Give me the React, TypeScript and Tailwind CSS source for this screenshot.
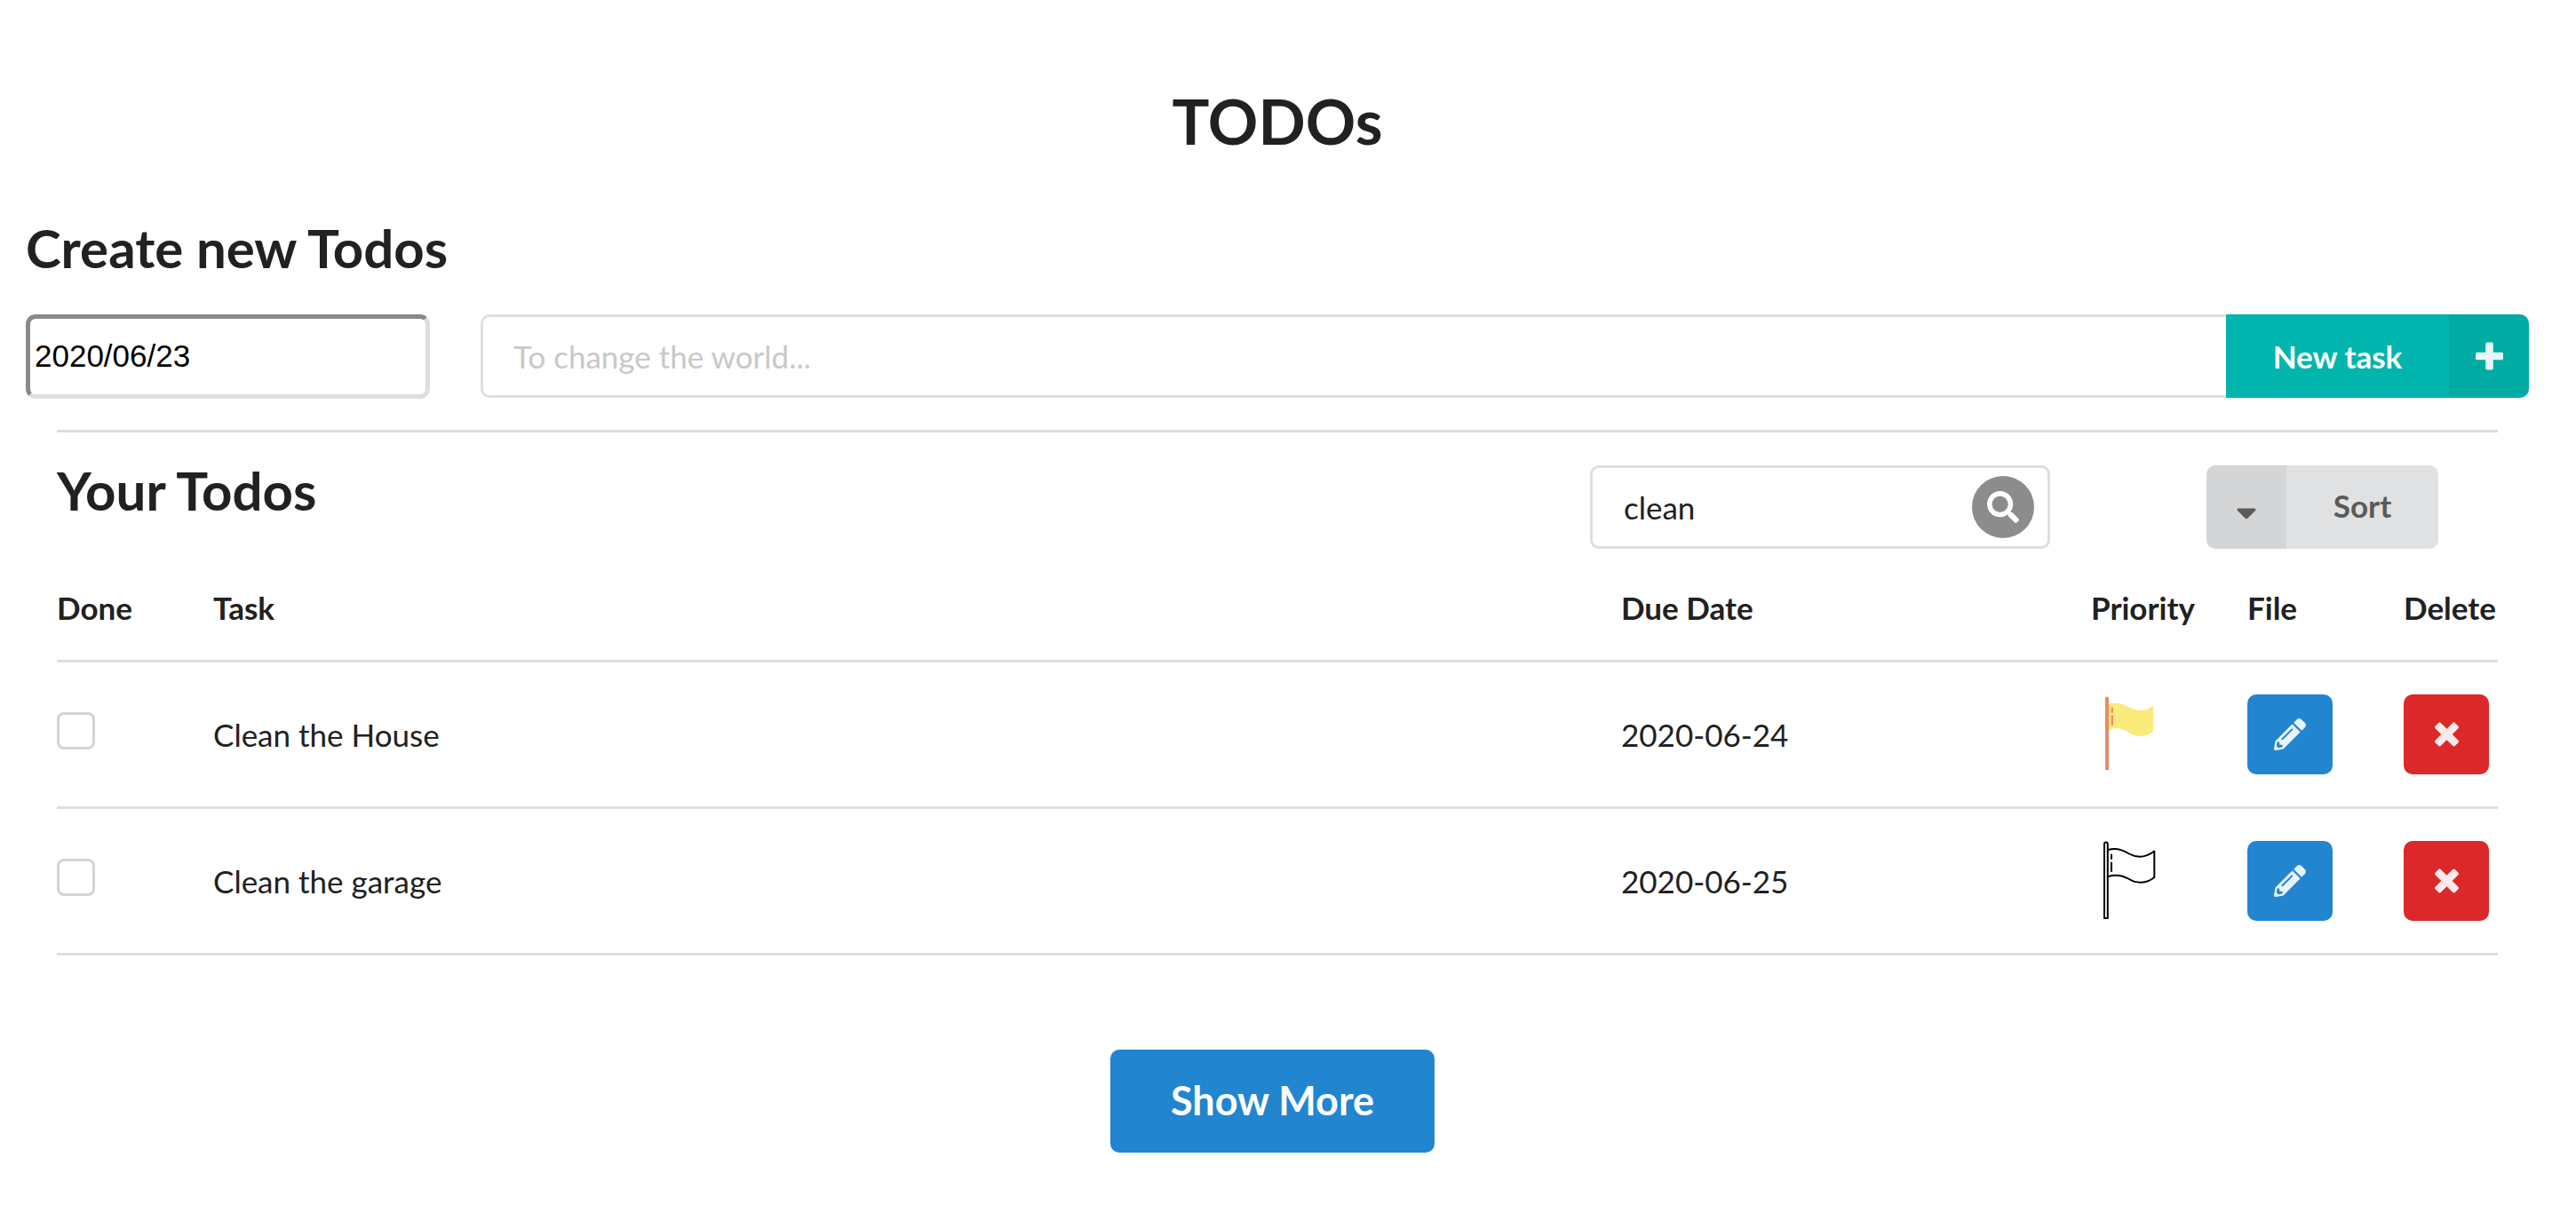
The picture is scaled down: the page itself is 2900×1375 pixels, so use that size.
import { useState } from "react";
import type { ReactNode } from "react";
import { FaCaretDown, FaPencilAlt, FaSearch } from "react-icons/fa";

type Priority = "medium" | "none";

interface Todo {
  id: string;
  task: string;
  due: string;
  priority: Priority;
}

const TODOS: Todo[] = [
  { id: "house", task: "Clean the House", due: "2020-06-24", priority: "medium" },
  { id: "garage", task: "Clean the garage", due: "2020-06-25", priority: "none" },
];

function PlusIcon() {
  return (
    <svg viewBox="0 0 448 512" className="h-[36px] w-[31px] fill-current" aria-hidden="true">
      <path d="M448 294.2v-76.4c0-13.3-10.7-24-24-24H286.2V56c0-13.3-10.7-24-24-24h-76.4c-13.3 0-24 10.7-24 24v137.8H24c-13.3 0-24 10.7-24 24v76.4c0 13.3 10.7 24 24 24h137.8V456c0 13.3 10.7 24 24 24h76.4c13.3 0 24-10.7 24-24V318.2H424c13.3 0 24-10.7 24-24z" />
    </svg>
  );
}

function CrossIcon() {
  return (
    <svg viewBox="0 0 384 512" className="h-[36px] w-[27px] fill-current" aria-hidden="true">
      <path d="M323.1 441l53.9-53.9c9.4-9.4 9.4-24.5 0-33.9L279.8 256l97.2-97.2c9.4-9.4 9.4-24.5 0-33.9L323.1 71c-9.4-9.4-24.5-9.4-33.9 0L192 168.2 94.8 71c-9.4-9.4-24.5-9.4-33.9 0L7 124.9c-9.4 9.4-9.4 24.5 0 33.9l97.2 97.2L7 353.2c-9.4 9.4-9.4 24.5 0 33.9L60.9 441c9.4 9.4 24.5 9.4 33.9 0l97.2-97.2 97.2 97.2c9.3 9.3 24.5 9.3 33.9 0z" />
    </svg>
  );
}

function Flag({ priority }: { priority: Priority }) {
  if (priority === "medium") {
    return (
      <svg viewBox="0 0 88 90" className="h-[90px] w-[88px]" role="img" aria-label="Medium priority">
        <path d="M19.5 11.2C27 8.5 35 10 43 14.5C52 19.5 62 19.5 70 12.5V41.5C62 48.5 51 48.5 43 43C35 38 27 37 19.5 40Z" fill="#f8eb7c" />
        <path d="M16 85V4.5a2 2 0 0 1 4 0V85Z" fill="#e58c66" />
        <path d="M23.8 15.5v4.500M23.8 24.5v9.5" stroke="#e9985f" strokeWidth="2.4" strokeLinecap="round" />
      </svg>
    );
  }
  return (
    <svg viewBox="0 0 88 90" className="h-[90px] w-[88px]" role="img" aria-label="No priority" fill="none" stroke="#000">
      <path d="M15 87V3.5a1.9 1.9 0 0 1 3.8 0V87Z" strokeWidth="2" strokeLinejoin="round" />
      <path d="M19.5 10C27 7.5 35 9.5 43 14.5C52 19.5 62 18.5 71.3 11.5V41C62 48.5 51 48 43 43C35 38.5 27 37.5 19.5 40" strokeWidth="2" strokeLinejoin="round" />
      <path d="M23 15.5v4.5M23 24.5v9.5" strokeWidth="2" strokeLinecap="round" />
    </svg>
  );
}

function IconButton({ label, color, children }: { label: string; color: string; children: ReactNode }) {
  return (
    <button
      type="button"
      aria-label={label}
      className={`flex h-[90px] w-[96px] items-center justify-center rounded-[10px] text-white/90 ${color}`}
    >
      {children}
    </button>
  );
}

function TodoRow({ todo }: { todo: Todo }) {
  const [done, setDone] = useState(false);
  return (
    <tr className="h-[165px] border-b-3 border-[#dedede]">
      <td className="pb-[8px]">
        <input
          type="checkbox"
          aria-label={`Mark ${todo.task} as done`}
          checked={done}
          onChange={(e) => setDone(e.target.checked)}
          className="block h-[42px] w-[43px] appearance-none rounded-[8px] border-3 border-[#d4d4d5] bg-white checked:bg-[#2185d0]"
        />
      </td>
      <td>{todo.task}</td>
      <td>{todo.due}</td>
      <td>
        <Flag priority={todo.priority} />
      </td>
      <td>
        <IconButton label={`Attach file to ${todo.task}`} color="bg-[#2185d0]">
          <FaPencilAlt className="size-[36px]" />
        </IconButton>
      </td>
      <td>
        <IconButton label={`Delete ${todo.task}`} color="bg-[#db2828]">
          <CrossIcon />
        </IconButton>
      </td>
    </tr>
  );
}

export default function App() {
  const [date, setDate] = useState("2020/06/23");
  const [task, setTask] = useState("");
  const [query, setQuery] = useState("clean");

  return (
    <main className="min-h-screen bg-white pt-[91px] pr-[53px] pb-[76px] pl-[29px] font-[Lato,sans-serif] text-[35px] leading-[50px] text-[#212121]">
      <h1 className="text-center text-[70px] leading-[90px] font-bold">TODOs</h1>

      <section aria-labelledby="create-heading" className="mt-[58px]">
        <h2 id="create-heading" className="text-[60px] leading-[80px] font-bold">
          Create new Todos
        </h2>
        <form className="mt-[35px] flex items-start" onSubmit={(e) => e.preventDefault()}>
          <input
            aria-label="Due date"
            value={date}
            onChange={(e) => setDate(e.target.value)}
            className="h-[95px] w-[455px] rounded-[11px] border-5 border-t-[#8a8a8a] border-r-[#dedede] border-b-[#dedede] border-l-[#8a8a8a] px-[5px] pb-[2px] font-['Liberation_Sans',sans-serif] text-black outline-none"
          />
          <input
            aria-label="New task"
            placeholder="To change the world..."
            value={task}
            onChange={(e) => setTask(e.target.value)}
            className="ml-[57px] h-[94px] min-w-0 flex-1 rounded-l-[10px] border-3 border-r-0 border-[#dedede] px-[34px] outline-none placeholder:text-[#c8c8c8]"
          />
          <button
            type="submit"
            className="flex h-[94px] overflow-hidden rounded-r-[10px] bg-[#00b5ad] font-bold text-white"
          >
            <span className="flex h-full w-[251px] items-center justify-center">New task</span>
            <span className="flex h-full w-[90px] items-center justify-center bg-black/5 text-white/90">
              <PlusIcon />
            </span>
          </button>
        </form>
      </section>

      <section aria-labelledby="list-heading" className="mt-[35px] mr-[35px] ml-[35px] border-t-3 border-[#dedede]">
        <div className="flex h-[131px] items-start pt-[37px]">
          <h2 id="list-heading" className="flex-1 text-[60px] leading-[56px] font-bold">
            Your Todos
          </h2>
          <div className="flex h-[94px] w-[518px] items-center rounded-[10px] border-3 border-[#dedede] pr-[15px] pl-[35px]">
            <input
              type="text"
              aria-label="Search todos"
              value={query}
              onChange={(e) => setQuery(e.target.value)}
              className="min-w-0 flex-1 outline-none"
            />
            <button
              type="button"
              aria-label="Search"
              className="flex size-[70px] items-center justify-center rounded-full bg-[#8c8c8c] text-white"
            >
              <FaSearch className="size-[36px]" />
            </button>
          </div>
          <button
            type="button"
            className="mr-[67px] ml-[176px] flex h-[94px] overflow-hidden rounded-[10px] bg-[#e0e1e2] font-bold text-[#5a5a5a]"
          >
            <span className="flex h-full w-[90px] items-center justify-center bg-black/5 pt-[12px]">
              <FaCaretDown className="size-[36px]" />
            </span>
            <span className="flex h-full w-[171px] items-center justify-center pb-[5px]">Sort</span>
          </button>
        </div>

        <table className="w-full table-fixed border-collapse text-left">
          <colgroup>
            <col className="w-[176px]" />
            <col />
            <col className="w-[529px]" />
            <col className="w-[176px]" />
            <col className="w-[176px]" />
            <col className="w-[106px]" />
          </colgroup>
          <thead>
            <tr className="h-[126px] border-b-3 border-[#dedede]">
              {["Done", "Task", "Due Date", "Priority", "File", "Delete"].map((name) => (
                <th key={name} scope="col" className="pt-[8px] font-bold">
                  {name}
                </th>
              ))}
            </tr>
          </thead>
          <tbody>
            {TODOS.map((todo) => (
              <TodoRow key={todo.id} todo={todo} />
            ))}
          </tbody>
        </table>
      </section>

      <div className="mt-[106px] flex justify-center pr-[11px]">
        <button type="button" className="h-[116px] rounded-[10px] bg-[#2185d0] px-[68px] pb-[2px] text-[45px] font-bold text-white">
          Show More
        </button>
      </div>
    </main>
  );
}
